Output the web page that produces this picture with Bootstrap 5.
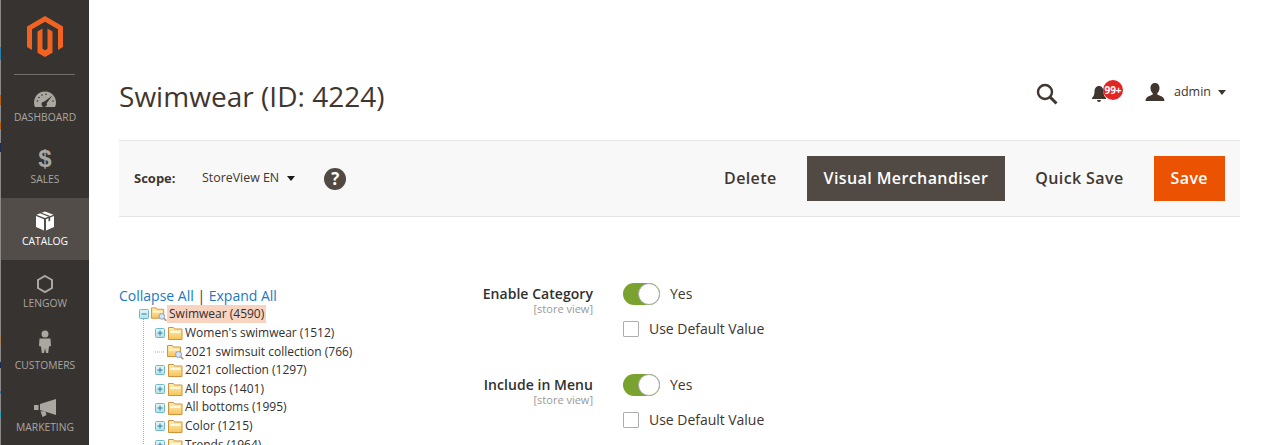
<!doctype html>
<html lang="en"><head><meta charset="utf-8">
<link href="https://cdn.jsdelivr.net/npm/bootstrap@5.3.0/dist/css/bootstrap.min.css" rel="stylesheet">
<style>
html,body{height:445px;overflow:hidden}
body{font-family:"Open Sans",sans-serif;color:#41362f;background:#fff;font-size:14px}
.edge-strip{width:1px;height:445px;flex:none;background:linear-gradient(180deg,#8a8a8a 0,#8a8a8a 47px,#2c7fa8 47px,#2c7fa8 60px,#8a8a8a 60px,#8a8a8a 95px,#b5600f 95px,#b5600f 105px,#8a8a8a 105px,#8a8a8a 122px,#b5600f 122px,#b5600f 129px,#8a8a8a 129px,#8a8a8a 143px,#1c2a55 143px,#1c2a55 152px,#8a8a8a 152px,#8a8a8a 335px,#a8805a 335px,#a8805a 345px,#8a8a8a 345px,#8a8a8a 362px,#1c2a55 362px,#1c2a55 368px,#8a8a8a 368px,#8a8a8a 391px,#2c7fa8 391px,#2c7fa8 394px,#8a8a8a 394px,#8a8a8a 412px,#2c9fb8 412px,#2c9fb8 418px,#8a8a8a 418px)}
.side-rail{width:88px;height:445px;background:#373330;flex:none;overflow:hidden}
.side-logo{height:75px;margin:0 14px -1px 13px;border-bottom:1px solid #736e69;padding-top:16px}
.side-item{height:62px;padding-top:12px;color:#aaa6a0;font-size:10.3px;line-height:14px;text-align:center}
.side-item svg{display:block;margin:0 auto 2px;height:22px}
.side-item svg.cust-icon{height:24px;margin-top:-4px;margin-bottom:4px}
.dollar-mark{display:block;height:22px;margin-bottom:2px;font:700 24px/22px "Liberation Sans",sans-serif}
.side-item.active-item{background:#524d49;color:#fff}
.main-col{padding:0 33px 0 30px;min-width:0}
.top-band{height:140px;padding-top:79px}
.page-heading{font-size:28px;line-height:35px;font-weight:400;margin:0;color:#41362f;letter-spacing:.03px}
.top-tools{margin-top:-3px;padding-right:14px;height:32px}
.find-icon{margin-top:3px}
.admin-name{font-size:12.5px;margin-left:9px;margin-right:7px}
.bell-wrap{margin-left:33px;margin-right:22px;width:32px;height:22px}
.notice-badge{position:absolute;left:12px;top:-1px;width:20px;height:20px;border-radius:50%;background:#e22626;color:#fff;font-size:10px;font-weight:700;line-height:20px;text-align:center}
.action-bar{height:77px;background:#f8f8f8;border-top:1px solid #e3e3e3;border-bottom:1px solid #e3e3e3;padding:0 15px}
.scope-label{font-size:13px;font-weight:700;width:68px;color:#41362f}
.scope-value{font-size:12.4px;color:#41362f}
.caret-down{width:0;height:0;border-left:4.5px solid transparent;border-right:4.5px solid transparent;border-top:5px solid #1a1a1a;display:inline-block}
.caret-soft{border-top-color:#41362f}
.scope-caret{margin-left:8px}
.help-dot{width:22px;height:22px;border-radius:50%;background:#514943;color:#fff;font-weight:700;font-size:17px;line-height:22px;text-align:center;margin-left:29px}
.flat-btn{font-size:16px;font-weight:600;letter-spacing:.4px;color:#41362f;padding:0 17px;height:45px;line-height:45px;border:0;background:transparent;border-radius:0}
.dark-btn{background:#514943;color:#fff;margin:0 13px}
.save-btn{background:#eb5202;color:#fff;margin-left:13px;padding:0 17px}
.form-zone{padding-top:70px}
.tree-col{width:270px;flex:none;font-size:12px;color:#303030}
.tree-links{font-size:14px;line-height:17px;color:#41362f}
.tree-links a{color:#1979c3;text-decoration:none}
.tree-row{height:18.6px;line-height:18.6px;white-space:nowrap;display:flex;align-items:center;position:relative}
.tree-root{padding-left:20px;height:20px}
.tree-child{padding-left:36px}
.tree-vline{position:absolute;left:23.5px;top:12px;bottom:0;border-left:1px dotted #aaa}
.tree-box{position:relative}
.tog-icon{width:10px;height:10px;margin-right:2px;flex:none}
.fold-icon{width:17px;height:16px;margin-right:1px;flex:none}
.root-fold{width:16px;margin-right:0}
.sel-text{background:#f7d3c0;padding:0 2px 0 2px;line-height:18px}
.fields-col{width:474px;flex:none;margin-left:4px;margin-top:-4px}
.fld-row{height:91px}
.fld-label{width:200px;text-align:right;flex:none;padding-top:2px}
.fld-label b{display:block;font-size:14px;font-weight:600;line-height:17px;color:#303030;letter-spacing:.05px}
.fld-scope{display:block;font-size:11px;line-height:13px;color:#999}
.fld-ctrl{margin-left:30px}
.tog-track{width:37px;height:22px;border-radius:11px;background:#79a22e;position:relative;flex:none}
.tog-knob{position:absolute;right:0;top:0;width:22px;height:22px;border-radius:50%;background:#fff;border:1px solid #adadad}
.tog-text{margin-left:10px;font-size:14px;line-height:22px;color:#41362f}
.def-row{margin-top:15px;display:flex;align-items:center}
.def-box{width:16px;height:16px;border:1px solid #adadad;border-radius:1px;background:#fff;margin-right:10px;flex:none}
.def-text{font-size:14px;color:#41362f;line-height:18px;letter-spacing:-.03px}
</style></head>
<body>
<svg width="0" height="0" class="position-absolute">
  <defs>
    <linearGradient id="foldFill" x1="0" y1="0" x2="0" y2="1"><stop offset="0" stop-color="#fff0b8"/><stop offset="1" stop-color="#f6c45a"/></linearGradient>
    <linearGradient id="togFill" x1="0" y1="0" x2="0" y2="1"><stop offset="0" stop-color="#e4f6fa"/><stop offset="1" stop-color="#b5e0ea"/></linearGradient>
  </defs>
  <symbol id="togPlus" viewBox="0 0 10 10"><rect x=".5" y=".5" width="9" height="9" rx="1" fill="url(#togFill)" stroke="#6fb8c9"/><path d="M2.500 5h5M5 2.500v5" stroke="#2f7f96"/></symbol>
  <symbol id="togMinus" viewBox="0 0 10 10"><rect x=".5" y=".5" width="9" height="9" rx="1" fill="url(#togFill)" stroke="#6fb8c9"/><path d="M2.500 5h5" stroke="#2f7f96"/></symbol>
  <symbol id="foldShut" viewBox="0 0 17 16"><path fill="url(#foldFill)" stroke="#d3913a" d="M1.500 2.500h5l1 1.500h7.500v10.500H1.500z"/><path fill="#fff8dc" d="M3 6h10.500v2H3z"/></symbol>
  <symbol id="foldSeek" viewBox="0 0 17 16"><path fill="url(#foldFill)" stroke="#d3913a" d="M.5 1.500h5l1 1.500h7v9.500H.5z"/><path fill="#fff8dc" d="M2 5h10v1.500H2z"/><circle cx="11.500" cy="10.500" r="3" fill="#d5e4f6" stroke="#7f9cc2"/><path d="M13.700 12.700l2.600 2.600" stroke="#b08a60" stroke-width="1.500"/></symbol>
</svg>
<div class="d-flex">
<div class="edge-strip"></div>
<nav class="side-rail">
  <div class="side-logo"><svg width="36" height="41" viewBox="0 0 36 41" class="d-block mx-auto"><path fill="#f26322" d="M18 0L36 10.400V31L31 34V13.300L18 5.800 5 13.300V34L0 31V10.400z"/><path fill="#f26322" d="M18 41L10.500 36.700V15.400L15.500 12.500V32.700L18 34.200 20.500 32.700V12.500L25.500 15.400V36.700z"/></svg></div>
  <div class="side-item"><svg width="24" height="22" viewBox="0 0 24 22"><path fill="currentColor" d="M2 21A11 11 0 1 1 22 21z"/><path fill="#373330" d="M19.500 9.500L13.600 17.300a2.600 2.600 0 1 1-2.600-1.600z"/><g fill="#373330"><circle cx="4.500" cy="15" r=".8"/><circle cx="6" cy="11.500" r=".8"/><circle cx="9" cy="9" r=".8"/><circle cx="13" cy="8.300" r=".8"/><circle cx="20" cy="15" r=".8"/></g></svg>DASHBOARD</div>
  <div class="side-item"><span class="dollar-mark">$</span>SALES</div>
  <div class="side-item active-item"><svg width="20" height="22" viewBox="0 0 20 22"><path fill="currentColor" d="M10 1.500l8.500 3.200-8.500 3.300-8.500-3.300zM1 6l8 3.200V20.500L1 17zM19 6l-8 3.200V20.500l8-3.500z"/><path fill="#524d49" d="M5 3.300l8.500 3.400 1.700-.7L6.700 2.700zM13.500 7.300l1.700-.6v4l-1.700.7z"/></svg>CATALOG</div>
  <div class="side-item"><svg width="18" height="22" viewBox="0 0 18 22"><path fill="none" stroke="currentColor" stroke-width="2" d="M9 4l7 4v8l-7 4-7-4V8z"/></svg>LENGOW</div>
  <div class="side-item"><svg class="cust-icon" width="14" height="24" viewBox="0 0 14 24"><circle cx="7" cy="4" r="3.500" fill="currentColor"/><path fill="currentColor" d="M1.500 8.500h11l.5 7.500-2 .5-.8 6.500H8l-1-5-1 5H3.800L3 16.500 1 16z"/></svg>CUSTOMERS</div>
  <div class="side-item"><svg width="24" height="22" viewBox="0 0 24 22"><path fill="currentColor" d="M23 3v16L7 14V8zM1 9h4.500v5H1z"/><path fill="currentColor" d="M7.500 15.200h5l1 3.800-4 2z"/></svg>MARKETING</div>
</nav>
<main class="main-col flex-grow-1">
  <div class="top-band d-flex justify-content-between align-items-start">
    <h1 class="page-heading">Swimwear (ID: 4224)</h1>
    <div class="top-tools d-flex align-items-center">
      <svg class="find-icon" width="22" height="22" viewBox="0 0 22 22"><circle cx="9" cy="9" r="7" fill="none" stroke="#41362f" stroke-width="2.400"/><path d="M14 14l6.500 6.500" stroke="#41362f" stroke-width="3"/></svg>
      <div class="bell-wrap position-relative"><svg width="16" height="18" viewBox="0 0 16 18" class="position-absolute bottom-0"><path fill="#41362f" d="M8 1c3 0 4.500 2.500 4.500 5.500 0 3.500 1 5 2.500 6.500v1H1v-1c1.500-1.500 2.500-3 2.500-6.500C3.500 3.500 5 1 8 1zM6 15h4a2 2 0 0 1-4 0z"/></svg><span class="notice-badge">99+</span></div>
      <svg width="20" height="18" viewBox="0 0 20 18"><path fill="#41362f" d="M10 0c3 0 4.500 2.300 4.500 5s-1 4.200-2.200 5.200v1.400c2.500 1.400 7.200 1.900 7.200 6.400H.5c0-4.500 4.700-5 7.200-6.400v-1.400C6.500 9.200 5.500 7.700 5.500 5S7 0 10 0z"/></svg>
      <span class="admin-name">admin</span><span class="caret-down caret-soft"></span>
    </div>
  </div>
  <div class="action-bar d-flex align-items-center">
    <span class="scope-label">Scope:</span>
    <span class="scope-value">StoreView EN</span>
    <span class="caret-down scope-caret"></span>
    <span class="help-dot">?</span>
    <div class="ms-auto d-flex align-items-center">
      <button class="btn flat-btn">Delete</button>
      <button class="btn flat-btn dark-btn">Visual Merchandiser</button>
      <button class="btn flat-btn">Quick Save</button>
      <button class="btn flat-btn save-btn">Save</button>
    </div>
  </div>
  <div class="form-zone d-flex">
    <div class="tree-col">
      <div class="tree-links"><a href="#">Collapse All</a> | <a href="#">Expand All</a></div>
      <div class="tree-box">
        <div class="tree-vline"></div>
        <div class="tree-row tree-root"><svg class="tog-icon"><use href="#togMinus"/></svg><svg class="fold-icon root-fold"><use href="#foldSeek"/></svg><span class="sel-text">Swimwear (4590)</span></div>
        <div class="tree-row tree-child"><svg class="tog-icon"><use href="#togPlus"/></svg><svg class="fold-icon"><use href="#foldShut"/></svg><span>Women's swimwear (1512)</span></div>
        <div class="tree-row tree-child"><svg class="tog-icon" viewBox="0 0 10 10"><path d="M0 5h10" stroke="#aaa" stroke-dasharray="1 1"/></svg><svg class="fold-icon"><use href="#foldSeek"/></svg><span>2021 swimsuit collection (766)</span></div>
        <div class="tree-row tree-child"><svg class="tog-icon"><use href="#togPlus"/></svg><svg class="fold-icon"><use href="#foldShut"/></svg><span>2021 collection (1297)</span></div>
        <div class="tree-row tree-child"><svg class="tog-icon"><use href="#togPlus"/></svg><svg class="fold-icon"><use href="#foldShut"/></svg><span>All tops (1401)</span></div>
        <div class="tree-row tree-child"><svg class="tog-icon"><use href="#togPlus"/></svg><svg class="fold-icon"><use href="#foldShut"/></svg><span>All bottoms (1995)</span></div>
        <div class="tree-row tree-child"><svg class="tog-icon"><use href="#togPlus"/></svg><svg class="fold-icon"><use href="#foldShut"/></svg><span>Color (1215)</span></div>
        <div class="tree-row tree-child"><svg class="tog-icon"><use href="#togPlus"/></svg><svg class="fold-icon"><use href="#foldShut"/></svg><span>Trends (1964)</span></div>
      </div>
    </div>
    <div class="fields-col">
      <div class="fld-row d-flex">
        <div class="fld-label"><b>Enable Category</b><span class="fld-scope">[store view]</span></div>
        <div class="fld-ctrl"><div class="d-flex align-items-center"><div class="tog-track"><div class="tog-knob"></div></div><span class="tog-text">Yes</span></div><div class="def-row"><span class="def-box"></span><span class="def-text">Use Default Value</span></div></div>
      </div>
      <div class="fld-row d-flex">
        <div class="fld-label"><b>Include in Menu</b><span class="fld-scope">[store view]</span></div>
        <div class="fld-ctrl"><div class="d-flex align-items-center"><div class="tog-track"><div class="tog-knob"></div></div><span class="tog-text">Yes</span></div><div class="def-row"><span class="def-box"></span><span class="def-text">Use Default Value</span></div></div>
      </div>
    </div>
  </div>
</main>
</div>
<script src="https://cdn.jsdelivr.net/npm/bootstrap@5.3.0/dist/js/bootstrap.bundle.min.js"></script>
</body></html>
